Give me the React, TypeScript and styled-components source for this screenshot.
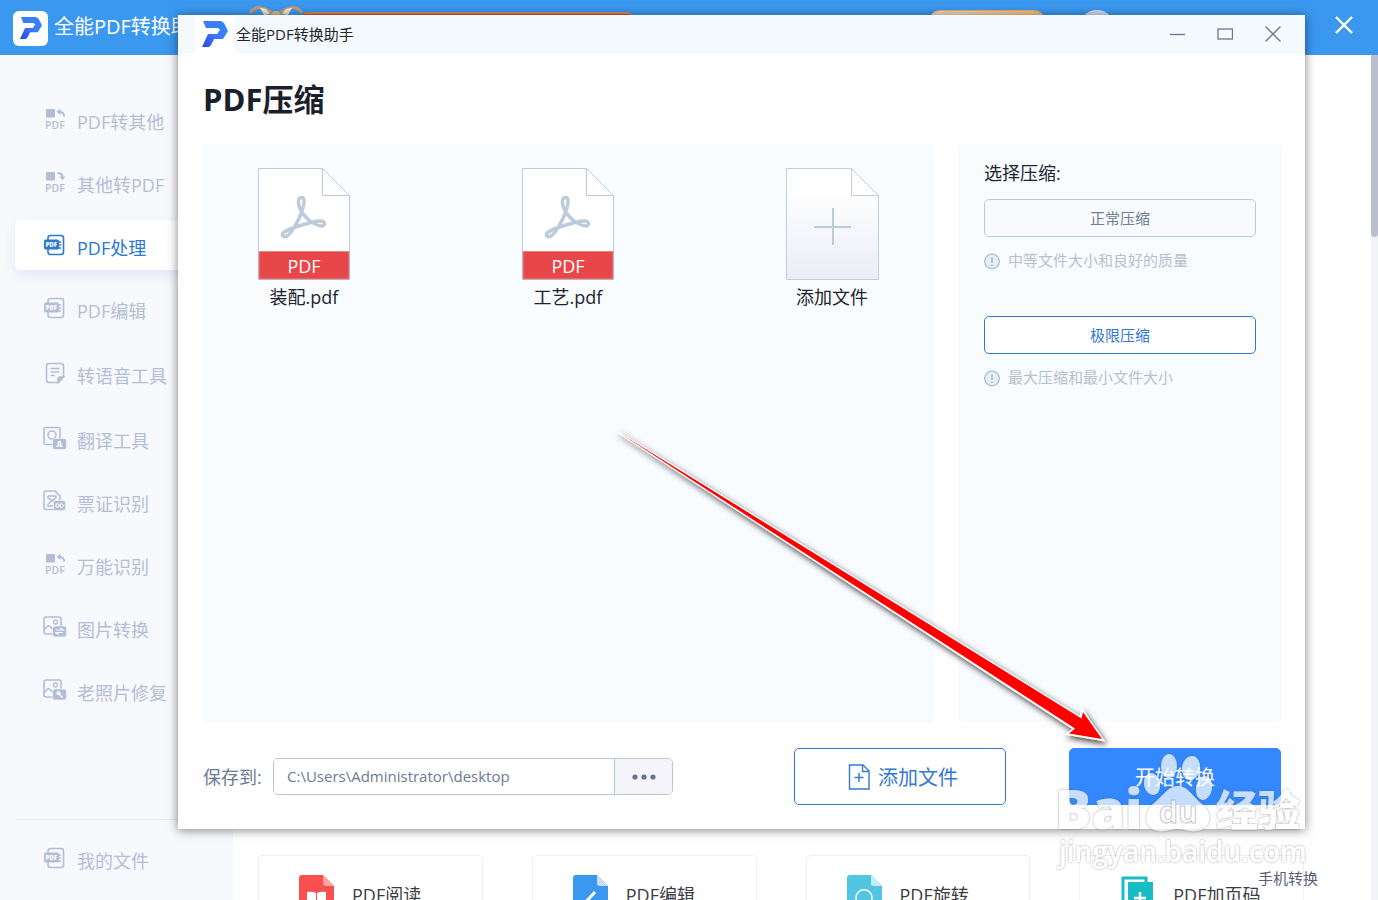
import React from 'react';
import styled, { createGlobalStyle, css } from 'styled-components';

const GlobalStyle = createGlobalStyle`
  *, *::before, *::after { box-sizing: border-box; }
  body {
    margin: 0;
    background: #fff;
    font-family: "Open Sans", "Noto Sans CJK SC", sans-serif;
    font-size: 18px;
    font-weight: 400;
  }
  button, input { font: inherit; color: inherit; }
  button { cursor: pointer; padding: 0; border: 0; background: none; }
  a { color: inherit; text-decoration: none; }
  svg { display: block; flex: none; }
`;

/* ---------- application behind the dialog ---------- */

const Page = styled.div`
  position: relative;
  display: flex;
  flex-direction: column;
  height: 100vh;
  min-height: 700px;
  overflow: hidden;
`;

const AppHeader = styled.header`
  display: flex;
  align-items: center;
  flex: none;
  height: 55px;
  padding: 0 24px 0 13px;
  background: #3b98ef;
  color: #fff;
`;

const Brand = styled.div`
  display: flex;
  align-items: center;
  gap: 6px;
  width: 235px;
  font-size: 20px;
  line-height: 30px;
  padding-bottom: 2px;
  white-space: nowrap;
`;

const BrandTile = styled.span`
  display: grid;
  place-items: center;
  width: 35px;
  height: 35px;
  margin-top: 3px;
  border-radius: 6px;
  background: #fff;
`;

const PromoBanner = styled.div`
  display: flex;
  align-items: flex-start;
  height: 44px;
`;

const PromoStrip = styled.span`
  width: 328px;
  height: 32px;
  margin-top: 6px;
  border-top: 2px solid #c98d62;
  border-radius: 2px 4px 4px 2px;
  background: #e0532f;
`;

const VipPill = styled.span`
  width: 118px;
  height: 35px;
  margin-left: auto;
  border: 1px solid #f0a765;
  border-radius: 12px;
  background: linear-gradient(90deg, #ecdccb, #f6bd7c);
`;

const Avatar = styled.span`
  width: 36px;
  height: 36px;
  margin: 0 219px 0 33px;
  border: 5px solid #cfdcf6;
  border-radius: 50%;
  background: #6d9ede;
`;

const HeaderClose = styled.button`
  display: grid;
  place-items: center;
  width: 20px;
  height: 28px;
  margin-bottom: 5px;
`;

const AppBody = styled.div`
  display: flex;
  flex: 1;
  min-height: 0;
`;

const Sidebar = styled.aside`
  display: flex;
  flex-direction: column;
  justify-content: space-between;
  flex: none;
  width: 233px;
  padding-left: 15px;
  background: #f8f9fd;
`;

const NavList = styled.nav`
  display: flex;
  flex-direction: column;
  gap: 13px;
  padding-top: 39px;
`;

const NavLink = styled.a<{ $active?: boolean; $spaced?: boolean }>`
  display: flex;
  align-items: center;
  gap: 9px;
  height: 50px;
  padding-left: 27px;
  border-radius: 5px;
  line-height: 24px;
  color: #b4bdd6;
  white-space: nowrap;
  ${(p) => p.$spaced && css`margin-top: 2px;`}
  ${(p) =>
    p.$active &&
    css`
      color: #2b78d0;
      background: #fff;
      box-shadow: 0 5px 12px #dfe8f8;
    `}
`;

const NavLabel = styled.span`
  padding-top: 5px;
`;

const SidebarFooter = styled.div`
  height: 81px;
  padding-top: 13px;
  border-top: 1px solid #eaecf2;
`;

const Main = styled.main`
  display: flex;
  flex-direction: column;
  justify-content: flex-end;
  flex: 1;
  min-width: 0;
  padding: 0 67px 0 25px;
`;

const ToolGrid = styled.div`
  display: grid;
  grid-template-columns: repeat(4, 1fr);
  gap: 49px;
  height: 45px;
`;

const ToolCard = styled.a`
  display: flex;
  align-items: center;
  gap: 15px;
  height: 80px;
  padding-left: 38px;
  border: 1px solid #eeeff3;
  border-radius: 5px;
  color: #3c3c44;
  line-height: 24px;
  white-space: nowrap;
`;

const Scrollbar = styled.div`
  flex: none;
  width: 7px;
  background: #f3f4f8;
`;

const ScrollThumb = styled.div`
  height: 182px;
  border-radius: 0 0 4px 4px;
  background: #bbbfcf;
`;

const PhoneLink = styled.a`
  position: absolute;
  right: 60px;
  bottom: 12px;
  font-size: 15px;
  line-height: 20px;
  color: #5c5f78;
`;

/* ---------- dialog ---------- */

const Dialog = styled.section`
  position: absolute;
  inset: 15px 73px 71px 178px;
  display: flex;
  flex-direction: column;
  background: #fefeff;
  box-shadow: 0 1px 10px rgba(0, 0, 0, 0.5);
`;

const TitleBar = styled.div`
  display: flex;
  align-items: center;
  flex: none;
  height: 38px;
  padding: 0 8px 0 17px;
  background: #f5fafe;
  font-size: 15px;
  line-height: 20px;
  color: #22242c;
`;

const TitleTile = styled.span`
  display: grid;
  place-items: center;
  width: 40px;
  height: 38px;
  margin-right: 1px;
  border-radius: 4px;
  background: #fff;
`;

const WindowControls = styled.div`
  display: flex;
  margin-left: auto;
`;

const WindowButton = styled.button`
  display: grid;
  place-items: center;
  width: 48px;
  height: 38px;
`;

const DialogBody = styled.div`
  display: flex;
  flex-direction: column;
  flex: 1;
  min-height: 0;
  padding: 24px 24px 24px 25px;
`;

const DialogTitle = styled.h1`
  margin: 0 0 23px;
  font-size: 31px;
  line-height: 44px;
  font-weight: 700;
  color: #1b1f2b;
`;

const Panels = styled.div`
  display: flex;
  flex: 1;
  gap: 25px;
  min-height: 0;
`;

const FilePanel = styled.div`
  display: flex;
  flex: 1;
  flex-wrap: wrap;
  align-items: flex-start;
  align-content: flex-start;
  gap: 24px 62px;
  padding-top: 24px;
  border-radius: 4px;
  background: #f8fcff;
`;

const FileTile = styled.figure`
  display: flex;
  flex-direction: column;
  align-items: center;
  gap: 4px;
  width: 202px;
  margin: 0;
  line-height: 26px;
  color: #22242c;
`;

const FileSheet = styled.div`
  position: relative;
`;

const FileType = styled.span`
  position: absolute;
  inset: auto 0 0;
  line-height: 27px;
  text-align: center;
  color: #fff;
`;

const OptionPanel = styled.fieldset`
  flex: none;
  width: 322px;
  min-width: 0;
  margin: 0;
  padding: 17px 25px;
  border: 0;
  border-radius: 4px;
  background: #f8fcff;
`;

const OptionHeading = styled.div`
  margin-bottom: 14px;
  line-height: 24px;
  color: #22242c;
`;

const OptionGroup = styled.div`
  margin-bottom: 44px;
`;

const OptionButton = styled.button<{ $selected?: boolean }>`
  display: block;
  width: 100%;
  height: 38px;
  padding-bottom: 1px;
  border: 1px solid ${(p) => (p.$selected ? '#3479d0' : '#bbc8d9')};
  border-radius: 5px;
  background: ${(p) => (p.$selected ? '#fff' : '#f9fafd')};
  color: ${(p) => (p.$selected ? '#3479d0' : '#707e98')};
  font-size: 15px;
`;

const OptionHint = styled.p`
  display: flex;
  align-items: center;
  gap: 8px;
  margin: 11px 0 0;
  font-size: 15px;
  line-height: 24px;
  color: #b7bfcd;
`;

const DialogFooter = styled.div`
  display: flex;
  align-items: center;
  flex: none;
  padding-top: 26px;
`;

const SaveLabel = styled.label`
  width: 70px;
  line-height: 24px;
  color: #6c7a92;
  white-space: nowrap;
`;

const PathGroup = styled.div`
  display: flex;
  width: 400px;
  height: 37px;
  border: 1px solid #b9c5d8;
  border-radius: 5px;
  overflow: hidden;
`;

const PathInput = styled.input`
  flex: 1;
  min-width: 0;
  padding: 0 13px 2px;
  border: 0;
  outline: 0;
  background: #fff;
  font-size: 15px;
  color: #6c7a92;
`;

const BrowseButton = styled.button`
  display: grid;
  place-items: center;
  width: 58px;
  border-left: 1px solid #b9c5d8;
  background: #f4f4fa;
`;

const Actions = styled.div`
  display: flex;
  gap: 63px;
  margin-left: auto;
`;

const ActionButton = styled.button<{ $primary?: boolean }>`
  display: flex;
  align-items: center;
  justify-content: center;
  gap: 8px;
  width: 212px;
  height: 57px;
  border: 1px solid #3479d0;
  border-radius: 5px;
  background: #fff;
  color: #3479d0;
  font-size: 20px;
  ${(p) =>
    p.$primary
      ? css`
          border-color: #3388fd;
          background: #3388fd;
          color: #fff;
        `
      : css`
          padding-left: 6px;
        `}
`;

const PointerArrow = styled.svg`
  position: absolute;
  right: 262px;
  bottom: 140px;
  pointer-events: none;
`;

const Watermark = styled.svg`
  position: absolute;
  right: 68px;
  bottom: 20px;
  pointer-events: none;
`;

/* ---------- drawings ---------- */

const LogoMark = ({ size }: { size: number }) => (
  <svg width={size} height={size} viewBox="0 0 26 26">
    <defs>
      <linearGradient id={`mark${size}`} x1="1" y1="0" x2="0" y2="1">
        <stop offset="0" stopColor="#2c8cf7" />
        <stop offset=".5" stopColor="#3f78fb" />
        <stop offset="1" stopColor="#2448df" />
      </linearGradient>
    </defs>
    <path
      d="M1 0H19L22 2L26 10L21 18H12L9 24L7 26H0L6 13H15L18 9L16 7H4Z"
      fill={`url(#mark${size})`}
    />
  </svg>
);

type IconName = 'export' | 'import' | 'pdf' | 'note' | 'translate' | 'ticket' | 'picture' | 'repair';

const pictureBase = (
  <>
    <rect x="2" y="2" width="17" height="17" rx="2" />
    <circle cx="13.500" cy="7" r="2" strokeWidth="1.300" />
    <path d="M2 15L5 11.500Q6.500 10 8 11.500L11 14.500" />
    <rect x="10.500" y="11" width="14" height="11" rx="2.500" fill="currentColor" stroke="#f8f9fd" strokeWidth=".6" />
  </>
);

const pdfWord = (
  <text x="3" y="21.500" fontSize="10.500" fontWeight="600" fill="currentColor" stroke="none">PDF</text>
);

const glyphs: Record<IconName, React.ReactNode> = {
  export: (
    <>
      <rect x="4" y="2" width="9" height="8.500" rx="1" fill="currentColor" stroke="none" />
      <path d="M17 4.800C21 4.800 22 6.500 22.200 9.500" strokeWidth="2" />
      <path d="M14.500 4.700L18.500 1.500V8Z" fill="currentColor" stroke="none" />
      {pdfWord}
    </>
  ),
  import: (
    <>
      <rect x="4" y="2" width="9" height="8.500" rx="1" fill="currentColor" stroke="none" />
      <path d="M15.500 3C19 3 20.500 4.500 20.500 7" strokeWidth="2" />
      <path d="M17.500 6.500H23.500L20.500 10Z" fill="currentColor" stroke="none" />
      {pdfWord}
    </>
  ),
  pdf: (
    <>
      <rect x="6" y="2.500" width="15.500" height="19" rx="2.500" />
      <rect x="2" y="6.500" width="15" height="10" rx="1.500" fill="currentColor" stroke="none" />
      <path d="M16 9H19M16 12H19M16 15H19" strokeWidth="1.300" />
      <text x="3.500" y="13.800" fontSize="6" fontWeight="800" fill="#fff" stroke="none">PDF</text>
    </>
  ),
  note: (
    <>
      <path d="M7 2.500H19Q21.500 2.500 21.500 5V16L16.500 21.500H7Q4.500 21.500 4.500 19V5Q4.500 2.500 7 2.500Z" />
      <path d="M16 21.500V18Q16 16 18 16H21.500Z" fill="currentColor" />
      <path d="M8.500 7.500H17.500M8.500 11H17.500M8.500 14.500H13" strokeWidth="1.300" />
    </>
  ),
  translate: (
    <>
      <rect x="2" y="1.500" width="16" height="17" rx="1.500" />
      <circle cx="10" cy="9" r="4" />
      <rect x="10.500" y="12.500" width="14" height="11" rx="2.500" fill="currentColor" stroke="#f8f9fd" strokeWidth=".6" />
      <text x="14.500" y="21" fontSize="8" fontWeight="800" fill="#f8f9fd" stroke="none">A</text>
    </>
  ),
  ticket: (
    <>
      <path d="M4 2H13L18 7V20.500H4Q2 20.500 2 18.500V4Q2 2 4 2Z" />
      <path d="M6 7H14V9L10 11.500L14 14M6 7V9L10 11.500L6 15V17H11" strokeWidth="1.500" />
      <rect x="11.500" y="11.500" width="12" height="10" rx="2" fill="currentColor" stroke="#f8f9fd" strokeWidth=".6" />
      <circle cx="15.500" cy="16.500" r="1.700" stroke="#f8f9fd" strokeWidth="1.100" />
      <circle cx="19.500" cy="16.500" r="1.700" stroke="#f8f9fd" strokeWidth="1.100" />
    </>
  ),
  picture: (
    <>
      {pictureBase}
      <path d="M14 15H21L18.500 13M21 17.500H14L16.500 19.500" stroke="#f8f9fd" strokeWidth="1.200" />
    </>
  ),
  repair: (
    <>
      {pictureBase}
      <circle cx="16.500" cy="15.300" r="2" fill="#f8f9fd" stroke="none" />
      <path d="M17.500 16.500L20.500 19.500" stroke="#f8f9fd" strokeWidth="1.600" />
    </>
  ),
};

const NavIcon = ({ name }: { name: IconName }) => (
  <svg width="26" height="24" viewBox="0 0 26 24" fill="none" stroke="currentColor" strokeWidth="1.600">
    {glyphs[name]}
  </svg>
);

const PdfSheet = () => (
  <svg width="92" height="112" viewBox="0 0 92 112" fill="none">
    <path d="M.5 .5H64.500L91.500 27.500V111.500H.5Z" fill="#fff" stroke="#bccada" />
    <path d="M64.500 .5V27.500H91.500" stroke="#bccada" />
    <path
      d="M25 68C22 64 33 60 51 55C60 52.500 67 52 66.500 56C66 60 58 57.500 52 53C46 48 41 41 40.500 35C40 31 41.500 29.500 43.500 29.500C46.500 29.500 46.500 34 45.500 38C43 48 38 57 33 64C30 68 27 70 25 68Z"
      stroke="#bccada"
      strokeWidth="3.400"
    />
    <path d="M1 83.500H91V111H1Z" fill="#e84749" stroke="#d98a92" />
  </svg>
);

const AddSheet = () => (
  <svg width="93" height="112" viewBox="0 0 93 112" fill="none">
    <defs>
      <linearGradient id="sheet" x1="0" y1="0" x2="0" y2="1">
        <stop offset=".2" stopColor="#fff" />
        <stop offset="1" stopColor="#ebedf6" />
      </linearGradient>
    </defs>
    <path d="M.5 .5H65.500L92.500 27.500V111.500H.5Z" fill="url(#sheet)" stroke="#c3ccd9" />
    <path d="M65.500 .5V27.500H92.500Z" fill="#fff" stroke="#c3ccd9" />
    <path d="M28 59H65M47 40V77" stroke="#bccada" strokeWidth="2" />
  </svg>
);

const InfoIcon = () => (
  <svg width="16" height="19" viewBox="0 0 16 19">
    <circle cx="8" cy="10.500" r="7.300" fill="#e8eef8" stroke="#b0bacb" strokeWidth="1.300" />
    <path d="M8 6.500V12M8 13.500V15" stroke="#a6b1c4" strokeWidth="1.400" />
  </svg>
);

const AddFileIcon = () => (
  <svg width="22" height="26" viewBox="0 0 22 26" fill="none" stroke="#3479d0" strokeWidth="1.400">
    <path d="M1.500 1H15L21 7V25H1.500Z" />
    <path d="M14.500 1V7.500H21M11 9V18M6.500 13.500H15.500" />
  </svg>
);

const BowIcon = () => (
  <svg width="56" height="22" viewBox="0 0 56 22" fill="none">
    <path d="M2 7Q7 0 14 2T27 9Q20 12 10 10" stroke="#c99d6c" strokeWidth="3" />
    <path d="M54 7Q49 0 42 2T29 9Q36 12 46 10" stroke="#c99d6c" strokeWidth="3" />
    <path d="M12 2Q19 1 22 8L16 9ZM44 2Q37 1 34 8L40 9Z" fill="#f2e3cf" />
    <rect x="24" y="5" width="8" height="9" rx="3" fill="#dcb78a" />
  </svg>
);

type ToolKind = 'read' | 'edit' | 'rotate' | 'page';

const ToolIcon = ({ kind }: { kind: ToolKind }) => {
  if (kind === 'page') {
    return (
      <svg width="40" height="42" viewBox="0 0 40 42" fill="none">
        <path d="M5 34V4H28V8" stroke="#17bcc4" strokeWidth="3" />
        <path d="M10 8H35V40H10Z" fill="#17bcc4" />
        <path d="M22 18V30M16 24H28" stroke="#fff" strokeWidth="2.500" />
      </svg>
    );
  }
  const color = { read: '#fa4f50', edit: '#3a98ee', rotate: '#52c5e2' }[kind];
  const fold = { read: '#fda3a6', edit: '#d4ddf6', rotate: '#c4eef5' }[kind];
  return (
    <svg width="40" height="42" viewBox="0 0 40 42" fill="none">
      <path d="M5 1H26L37 12V38Q37 41 34 41H5Q2 41 2 38V4Q2 1 5 1Z" fill={color} />
      <path d="M26 1L37 12H29Q26 12 26 9Z" fill={fold} />
      {kind === 'read' && (
        <path d="M10 18Q15 17 19 19V33Q15 31 10 32ZM29 18Q24 17 20 19V33Q24 31 29 32Z" fill="#fff" />
      )}
      {kind === 'edit' && <path d="M13 30L24 18" stroke="#fff" strokeWidth="3" />}
      {kind === 'rotate' && <path d="M13 29A8 8 0 1 1 25 29" stroke="#fff" strokeWidth="1.500" />}
    </svg>
  );
};

/* ---------- data ---------- */

const navItems: { label: string; icon: IconName; active?: boolean; spaced?: boolean }[] = [
  { label: 'PDF转其他', icon: 'export' },
  { label: '其他转PDF', icon: 'import' },
  { label: 'PDF处理', icon: 'pdf', active: true },
  { label: 'PDF编辑', icon: 'pdf' },
  { label: '转语音工具', icon: 'note', spaced: true },
  { label: '翻译工具', icon: 'translate', spaced: true },
  { label: '票证识别', icon: 'ticket' },
  { label: '万能识别', icon: 'export' },
  { label: '图片转换', icon: 'picture' },
  { label: '老照片修复', icon: 'repair' },
];

const tools: { label: string; kind: ToolKind }[] = [
  { label: 'PDF阅读', kind: 'read' },
  { label: 'PDF编辑', kind: 'edit' },
  { label: 'PDF旋转', kind: 'rotate' },
  { label: 'PDF加页码', kind: 'page' },
];

const options = [
  { label: '正常压缩', hint: '中等文件大小和良好的质量', selected: false },
  { label: '极限压缩', hint: '最大压缩和最小文件大小', selected: true },
];

export default function App() {
  return (
    <Page>
      <GlobalStyle />
      <AppHeader>
        <Brand>
          <BrandTile><LogoMark size={22} /></BrandTile>
          全能PDF转换助手
        </Brand>
        <PromoBanner>
          <BowIcon />
          <PromoStrip />
        </PromoBanner>
        <VipPill />
        <Avatar />
        <HeaderClose aria-label="关闭">
          <svg width="18" height="18" viewBox="0 0 18 18" stroke="#fff" strokeWidth="2.400">
            <path d="M1 1L17 17M17 1L1 17" />
          </svg>
        </HeaderClose>
      </AppHeader>

      <AppBody>
        <Sidebar>
          <NavList>
            {navItems.map((item) => (
              <NavLink key={item.label} href="#" $active={item.active} $spaced={item.spaced}>
                <NavIcon name={item.icon} />
                <NavLabel>{item.label}</NavLabel>
              </NavLink>
            ))}
          </NavList>
          <SidebarFooter>
            <NavLink href="#">
              <NavIcon name="pdf" />
              <NavLabel>我的文件</NavLabel>
            </NavLink>
          </SidebarFooter>
        </Sidebar>
        <Main>
          <ToolGrid>
            {tools.map((tool) => (
              <ToolCard key={tool.label} href="#">
                <ToolIcon kind={tool.kind} />
                {tool.label}
              </ToolCard>
            ))}
          </ToolGrid>
        </Main>
        <Scrollbar><ScrollThumb /></Scrollbar>
      </AppBody>
      <PhoneLink href="#">手机转换</PhoneLink>

      <Dialog role="dialog" aria-labelledby="dialog-title">
        <TitleBar>
          <TitleTile><LogoMark size={26} /></TitleTile>
          全能PDF转换助手
          <WindowControls>
            <WindowButton aria-label="最小化">
              <svg width="16" height="16" stroke="#6d7393" strokeWidth="1.300"><path d="M1 8.500H16" /></svg>
            </WindowButton>
            <WindowButton aria-label="最大化">
              <svg width="16" height="16" fill="none" stroke="#6d7393" strokeWidth="1.300"><rect x="1" y="3" width="14.500" height="10" /></svg>
            </WindowButton>
            <WindowButton aria-label="关闭">
              <svg width="16" height="16" stroke="#6d7393" strokeWidth="1.300"><path d="M.5 .5L15.500 15.500M15.500 .5L.5 15.500" /></svg>
            </WindowButton>
          </WindowControls>
        </TitleBar>

        <DialogBody>
          <DialogTitle id="dialog-title">PDF压缩</DialogTitle>
          <Panels>
            <FilePanel>
              {['装配.pdf', '工艺.pdf'].map((name) => (
                <FileTile key={name}>
                  <FileSheet>
                    <PdfSheet />
                    <FileType>PDF</FileType>
                  </FileSheet>
                  <figcaption>{name}</figcaption>
                </FileTile>
              ))}
              <FileTile as="button">
                <AddSheet />
                添加文件
              </FileTile>
            </FilePanel>
            <OptionPanel aria-label="选择压缩">
              <OptionHeading>选择压缩:</OptionHeading>
              {options.map((option) => (
                <OptionGroup key={option.label}>
                  <OptionButton $selected={option.selected}>{option.label}</OptionButton>
                  <OptionHint><InfoIcon />{option.hint}</OptionHint>
                </OptionGroup>
              ))}
            </OptionPanel>
          </Panels>
          <DialogFooter>
            <SaveLabel htmlFor="save-path">保存到:</SaveLabel>
            <PathGroup>
              <PathInput id="save-path" defaultValue="C:\Users\Administrator\desktop" />
              <BrowseButton aria-label="浏览">
                <svg width="24" height="6" fill="#6b7194">
                  <circle cx="3" cy="3" r="2.600" />
                  <circle cx="12" cy="3" r="2.600" />
                  <circle cx="21" cy="3" r="2.600" />
                </svg>
              </BrowseButton>
            </PathGroup>
            <Actions>
              <ActionButton><AddFileIcon />添加文件</ActionButton>
              <ActionButton $primary>开始转换</ActionButton>
            </Actions>
          </DialogFooter>
        </DialogBody>
      </Dialog>

      <PointerArrow width="506" height="340" viewBox="610 420 506 340" aria-hidden="true">
        <defs>
          <filter id="arrow-shadow" x="-5%" y="-5%" width="110%" height="115%">
            <feDropShadow dx="2" dy="3" stdDeviation="3" floodColor="#000" floodOpacity=".75" />
          </filter>
        </defs>
        <path
          d="M618 432L1081 718L1082 710L1103 740L1067 734L1074 729Z"
          fill="#fff"
          stroke="#fff"
          strokeWidth="2"
          filter="url(#arrow-shadow)"
        />
        <path d="M618 432L1081.500 718.500L1083 712L1102 739L1069 733.500L1075 728.500Z" fill="#fe0000" />
      </PointerArrow>

      <Watermark width="260" height="130" viewBox="1050 750 260 130" aria-hidden="true">
        <defs>
          <filter id="mark-edge" x="-5%" y="-5%" width="110%" height="110%">
            <feDropShadow dx="0" dy="0" stdDeviation="1" floodColor="#555" floodOpacity=".8" />
          </filter>
        </defs>
        <g fill="#fff" opacity=".72" filter="url(#mark-edge)">
          <ellipse cx="1169" cy="766" rx="8" ry="12" />
          <ellipse cx="1191" cy="768" rx="9" ry="12" transform="rotate(8 1191 768)" />
          <ellipse cx="1152" cy="784" rx="8" ry="11" transform="rotate(-12 1152 784)" />
          <ellipse cx="1204" cy="788" rx="8" ry="12" transform="rotate(10 1204 788)" />
          <path d="M1178 786C1188 786 1193 797 1202 804C1213 812 1212 830 1196 831C1188 832 1184 829 1178 829C1170 829 1166 832 1159 831C1144 830 1143 812 1153 804C1162 797 1168 786 1178 786Z" />
          <text x="1055" y="829" fontSize="54" fontWeight="800" fontFamily="Open Sans">Bai</text>
          <text x="1216" y="826" fontSize="42" fontWeight="900" fontFamily="Noto Sans CJK SC">经验</text>
          <text x="1059" y="862" fontSize="28" fontWeight="600" fontFamily="Open Sans">jingyan.baidu.com</text>
        </g>
        <text x="1159" y="823" fontSize="30" fontWeight="700" fontFamily="Open Sans" fill="#fff" fillOpacity=".6" stroke="#b4b8c0" strokeOpacity=".8">du</text>
      </Watermark>
    </Page>
  );
}
